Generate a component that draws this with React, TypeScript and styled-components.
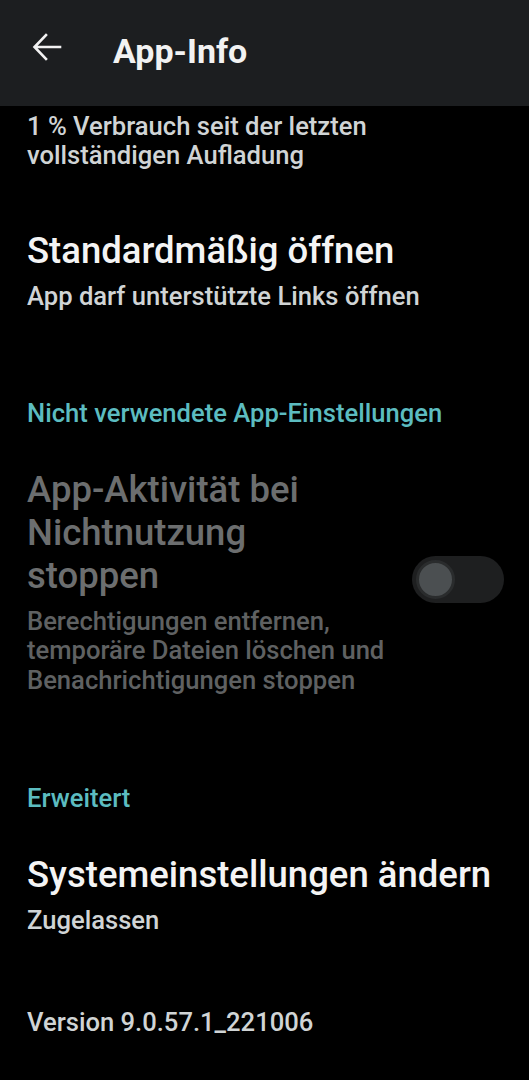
import React from "react";
import styled, { createGlobalStyle } from "styled-components";

const Global = createGlobalStyle`
  html, body {
    margin: 0;
    padding: 0;
    background: #000;
  }
  body {
    font-family: Roboto, "Noto Sans", sans-serif;
    -webkit-font-smoothing: antialiased;
  }
`;

const Page = styled.div`
  width: 529px;
  min-height: 1080px;
  background: #000;
  display: flex;
  flex-direction: column;
`;

const TopBar = styled.header`
  height: 106px;
  background: #1c1e20;
  display: flex;
  align-items: center;
  padding: 0 0 0 31px;
  box-sizing: border-box;
  gap: 50px;
`;

const BackButton = styled.div`
  width: 32px;
  height: 32px;
  display: flex;
  align-items: center;
  justify-content: center;
  margin-top: -12px;
`;

const TopTitle = styled.h1`
  margin: -4px 0 0;
  font-size: 34px;
  font-weight: 700;
  color: #f2f2f2;
`;

const Content = styled.main`
  padding: 0 27px;
  display: flex;
  flex-direction: column;
`;

const Summary = styled.p`
  margin: 6px 0 0;
  font-size: 25.6px;
  font-weight: 500;
  line-height: 29px;
  color: #d0d4d5;
  white-space: nowrap;
`;

const Item = styled.div<{ $top: number }>`
  margin-top: ${(p) => p.$top}px;
  display: flex;
  align-items: center;
  gap: 16px;
`;

const ItemText = styled.div`
  flex: 1;
  display: flex;
  flex-direction: column;
  white-space: nowrap;
`;

const ItemTitle = styled.div<{ $dim?: boolean }>`
  font-size: 36.5px;
  font-weight: 500;
  line-height: 43px;
  margin-bottom: 10px;
  color: ${(p) => (p.$dim ? "#6c6e6f" : "#f4f4f4")};
`;

const ItemSub = styled.div<{ $dim?: boolean }>`
  font-size: 25.6px;
  font-weight: 500;
  line-height: 29.5px;
  color: ${(p) => (p.$dim ? "#5f6162" : "#d0d4d5")};
`;

const SectionHeader = styled.div<{ $top: number }>`
  margin-top: ${(p) => p.$top}px;
  font-size: 25.6px;
  font-weight: 500;
  color: #5cbcc0;
  line-height: 28px;
`;

const Toggle = styled.div`
  width: 92px;
  height: 47px;
  border-radius: 24px;
  background: #1e1f20;
  flex-shrink: 0;
  display: flex;
  align-items: center;
  padding-left: 4px;
  box-sizing: border-box;
  margin-right: -2px;
  margin-top: -3px;
`;

const Thumb = styled.div`
  width: 33px;
  height: 33px;
  border-radius: 50%;
  background: #4b4f51;
  border: 3px solid #2a2c2d;
`;

const Version = styled.div`
  margin-top: 72px;
  font-size: 25.6px;
  font-weight: 500;
  color: #d0d4d5;
  line-height: 29px;
`;

export default function App() {
  return (
    <Page>
      <Global />
      <TopBar>
        <BackButton>
          <svg width="30" height="28" viewBox="0 0 30 28" fill="none">
            <path
              d="M28 14H3M14 2L2.5 14L14 26"
              stroke="#f2f2f2"
              strokeWidth="2.6"
              strokeLinecap="square"
            />
          </svg>
        </BackButton>
        <TopTitle>App-Info</TopTitle>
      </TopBar>
      <Content>
        <Summary>
          1 % Verbrauch seit der letzten
          <br />
          vollständigen Aufladung
        </Summary>

        <Item $top={59}>
          <ItemText>
            <ItemTitle>Standardmäßig öffnen</ItemTitle>
            <ItemSub>App darf unterstützte Links öffnen</ItemSub>
          </ItemText>
        </Item>

        <SectionHeader $top={87}>Nicht verwendete App-Einstellungen</SectionHeader>

        <Item $top={41}>
          <ItemText>
            <ItemTitle $dim>
              App-Aktivität bei
              <br />
              Nichtnutzung
              <br />
              stoppen
            </ItemTitle>
            <ItemSub $dim>
              Berechtigungen entfernen,
              <br />
              temporäre Dateien löschen und
              <br />
              Benachrichtigungen stoppen
            </ItemSub>
          </ItemText>
          <Toggle>
            <Thumb />
          </Toggle>
        </Item>

        <SectionHeader $top={89}>Erweitert</SectionHeader>

        <Item $top={41}>
          <ItemText>
            <ItemTitle>Systemeinstellungen ändern</ItemTitle>
            <ItemSub>Zugelassen</ItemSub>
          </ItemText>
        </Item>

        <Version>Version 9.0.57.1_221006</Version>
      </Content>
    </Page>
  );
}
